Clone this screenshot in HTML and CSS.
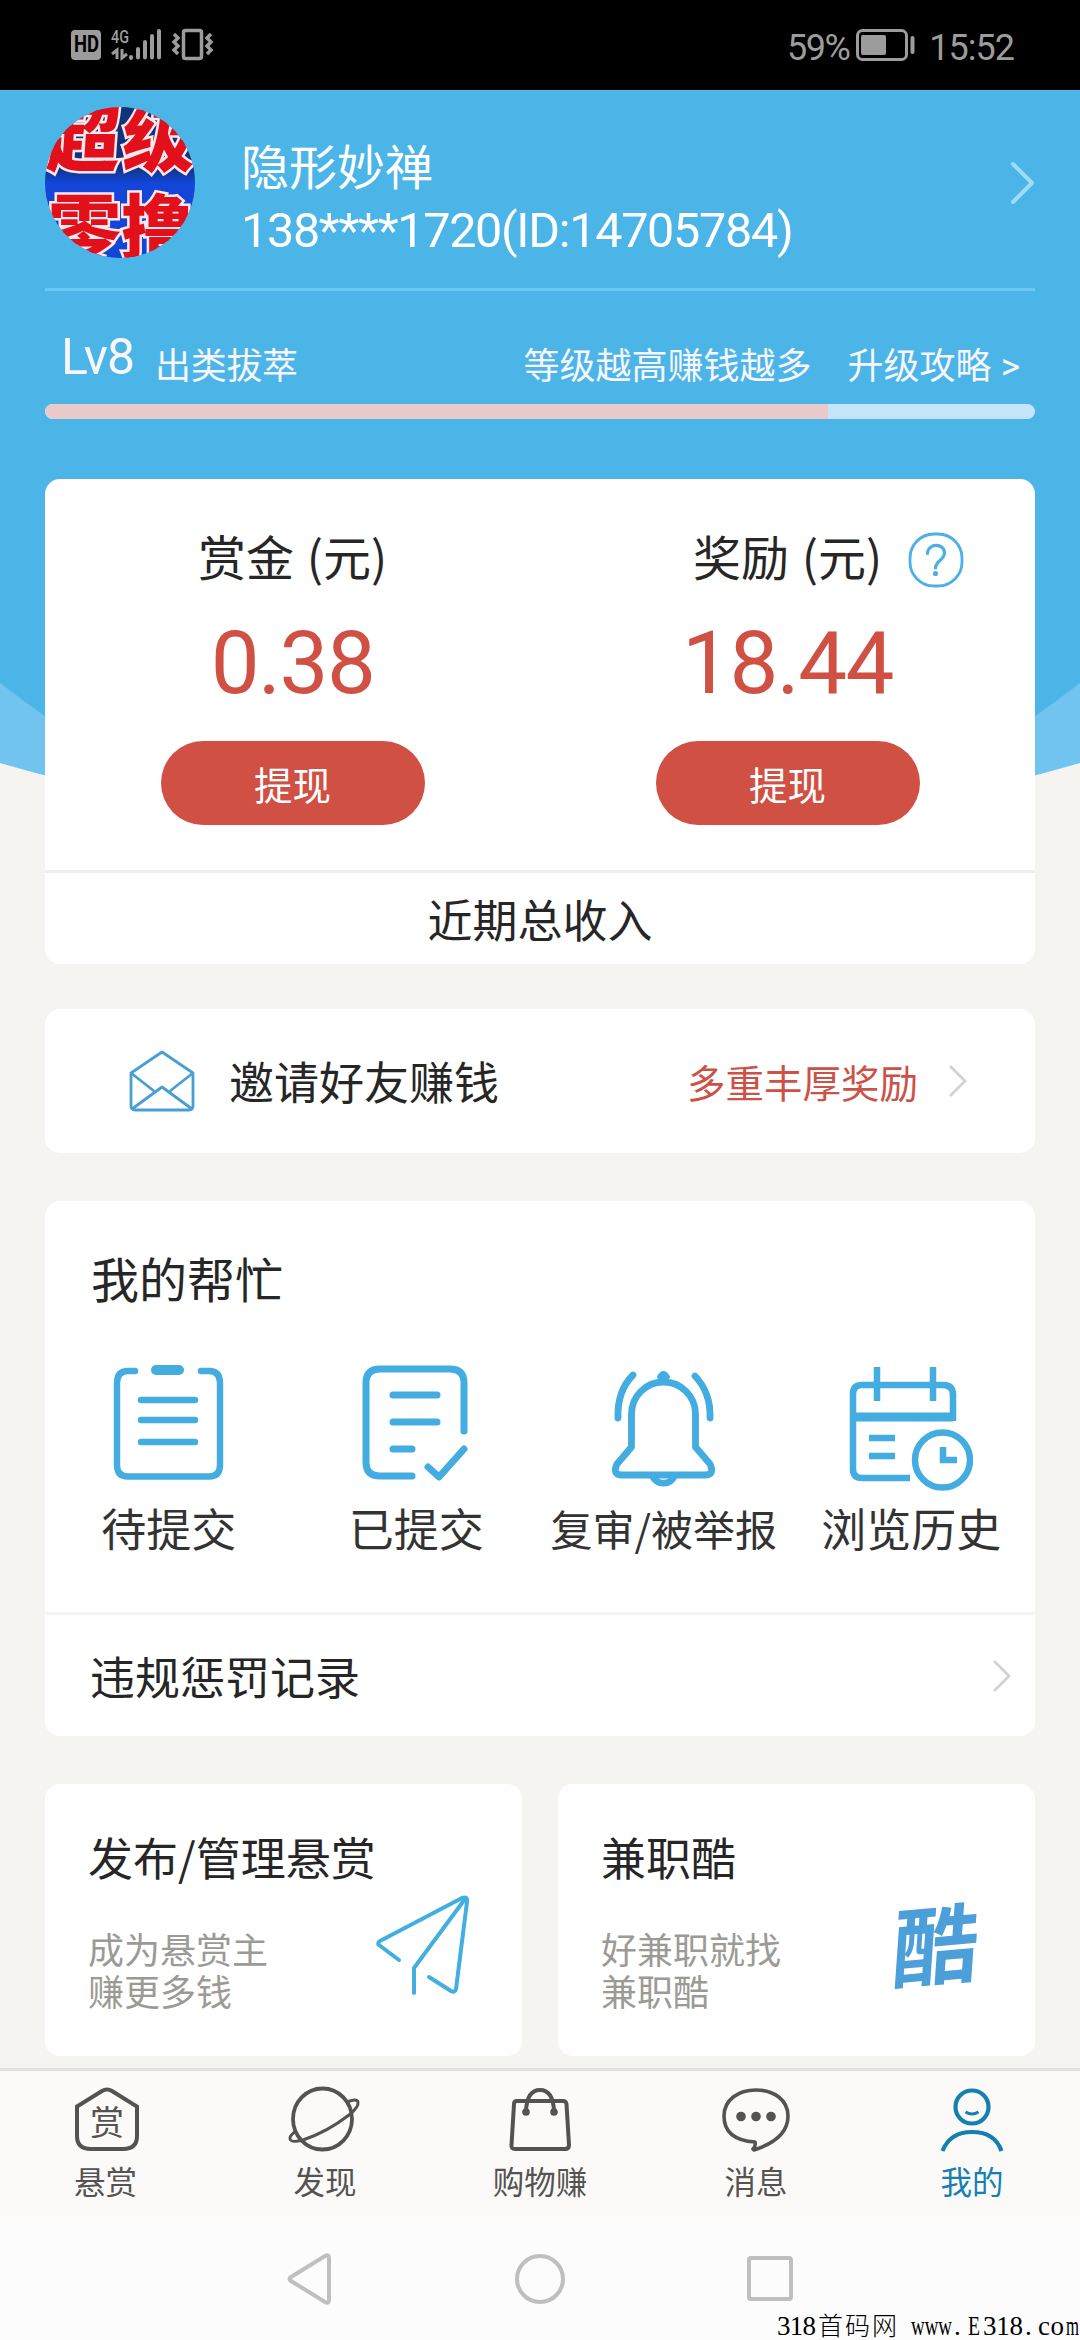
FILE: index.html
```html
<!DOCTYPE html>
<html lang="zh-CN">
<head>
<meta charset="utf-8">
<title>我的</title>
<link rel="stylesheet" href="styles.css">
</head>
<body>
<div class="screen">
  <header class="status">
    <svg class="status-icons" width="150" height="40" viewBox="68 26 150 40">
      <rect x="71" y="31" width="30" height="30" rx="4" fill="#9c9c9c"/>
      <text x="74" y="53" class="hd-label" textLength="25" lengthAdjust="spacingAndGlyphs">HD</text>
      <text x="111" y="44" class="net-label" textLength="18" lengthAdjust="spacingAndGlyphs">4G</text>
      <path d="M117 60V51L112 55M122 50V59L127 55" fill="none" stroke="#9c9c9c" stroke-width="3"/>
      <path d="M131 58V59M138 50V58.500M145 43V58.500M152 37V58.500M159 32V58.500" fill="none" stroke="#9c9c9c" stroke-width="4" stroke-linecap="round"/>
      <rect x="183.500" y="31.500" width="18" height="28" rx="2" fill="none" stroke="#9c9c9c" stroke-width="3.500"/>
      <path d="M174 35L178 39L174 43L178 47L174 51L178 55M211 35L207 39L211 43L207 47L211 51L207 55" fill="none" stroke="#9c9c9c" stroke-width="3.500"/>
    </svg>
    <div class="status-right">
      <span>59%</span>
      <svg width="62" height="34" viewBox="0 0 62 34">
        <rect x="2.500" y="2.500" width="49" height="29" rx="5" fill="none" stroke="#9c9c9c" stroke-width="3"/>
        <rect x="6" y="7" width="25" height="20" rx="2" fill="#9c9c9c"/>
        <path d="M57.500 10V24" stroke="#9c9c9c" stroke-width="4" stroke-linecap="round"/>
      </svg>
      <span class="clock">15:52</span>
    </div>
  </header>

  <main class="page">
    <svg class="backdrop" width="1080" height="900" viewBox="0 90 1080 900">
      <path d="M0 90H1080V763Q540 919 0 763Z" fill="#71c4ef"/>
      <path d="M0 90H1080V683Q540 1100 0 683Z" fill="#4cb5e8"/>
    </svg>

    <section class="profile">
      <svg class="avatar" width="150" height="151" viewBox="0 0 150 151">
        <defs>
          <clipPath id="round"><ellipse cx="75" cy="75.500" rx="75" ry="75.500"/></clipPath>
          <linearGradient id="blue" x1="0" y1="0" x2="0" y2="1">
            <stop offset="0" stop-color="#12337c"/><stop offset=".4" stop-color="#12337c"/>
            <stop offset=".5" stop-color="#1245d8"/><stop offset="1" stop-color="#1245d8"/>
          </linearGradient>
        </defs>
        <g clip-path="url(#round)">
          <rect width="150" height="151" fill="url(#blue)"/>
          <text class="avatar-text" transform="skewX(-4)" x="5" y="59" textLength="148">超级</text>
          <text class="avatar-text" x="3" y="148" textLength="146">零撸</text>
        </g>
      </svg>
      <div class="identity">
        <div class="name">隐形妙禅</div>
        <div class="account">138****1720(ID:14705784)</div>
      </div>
      <svg class="profile-arrow" width="26" height="46" viewBox="0 0 26 46"><path d="M3 4L22 23L3 42" fill="none" stroke="#a0dcfa" stroke-width="4" stroke-linecap="round" stroke-linejoin="round"/></svg>
    </section>

    <section class="level">
      <span class="level-no">Lv8</span>
      <span class="level-name">出类拔萃</span>
      <span class="level-tip">等级越高赚钱越多</span>
      <span class="level-guide">升级攻略 <b>&gt;</b></span>
    </section>
    <div class="progress"><div class="progress-value" style="width:79.1%"></div></div>

    <section class="card wallet">
      <div class="balances">
        <div class="balance">
          <div class="balance-title">赏金 <span>(元)</span></div>
          <div class="amount">0.38</div>
          <button class="withdraw">提现</button>
        </div>
        <div class="balance">
          <div class="balance-title">奖励 <span>(元)</span>
            <svg class="help" width="56" height="56" viewBox="0 0 56 56"><rect x="2" y="2" width="52" height="52" rx="24" fill="none" stroke="#4bb0e2" stroke-width="2.800"/><path d="M19.500 21.500C20 10.500 36.500 11 36.500 21C36.500 28 27.500 28.500 27.500 36" fill="none" stroke="#4bb0e2" stroke-width="3.200" stroke-linecap="round"/><circle cx="27.500" cy="41.500" r="2.600" fill="#4bb0e2"/></svg>
          </div>
          <div class="amount">18.44</div>
          <button class="withdraw">提现</button>
        </div>
      </div>
      <div class="income">近期总收入</div>
    </section>

    <section class="card invite">
      <svg class="envelope" width="66" height="64" viewBox="0 0 66 64" fill="none" stroke="#4a9fd2" stroke-width="2.800" stroke-linejoin="round"><path d="M2 24L33 3L64 24V57Q64 61 60 61H6Q2 61 2 57Z"/><path d="M2 24L25 42M64 24L41 42M3 60L33 38L63 60"/></svg>
      <span class="invite-title">邀请好友赚钱</span>
      <span class="invite-note">多重丰厚奖励</span>
      <svg width="20" height="34" viewBox="0 0 20 34"><path d="M2 2L17 17L2 32" fill="none" stroke="#d2d2d2" stroke-width="2.800"/></svg>
    </section>

    <section class="card help-card">
      <h2>我的帮忙</h2>
      <div class="tools">
        <div class="tool">
          <svg width="112" height="130" viewBox="0 0 112 130" fill="none" stroke="#43ace0" stroke-width="6.400" stroke-linecap="round"><path d="M22 8H15Q4 8 4 20V102Q4 113.500 15 113.500H96Q107 113.500 107 102V20Q107 8 96 8H88M28 37H82M28 57H82M28 79H82"/><path d="M43 7H66" stroke-width="10"/></svg>
          <span>待提交</span>
        </div>
        <div class="tool">
          <svg width="112" height="130" viewBox="0 0 112 130" fill="none" stroke="#43ace0" stroke-width="7" stroke-linecap="round" stroke-linejoin="round"><path d="M52 113H20Q6 113 6 99V20Q6 6 20 6H90Q104 6 104 20V68M33 32H77M33 59H77M33 86H52"/><path d="M68 104L79 114L104 86"/></svg>
          <span>已提交</span>
        </div>
        <div class="tool">
          <svg width="112" height="130" viewBox="0 0 112 130" fill="none" stroke="#43ace0" stroke-width="6.800" stroke-linejoin="round"><path d="M23.500 84V51A32 32 0 0 1 87.500 51V84L102 101Q107 112 97 112H14Q4 112 9 101Z"/><path d="M44.500 113A12 12 0 0 0 66.500 113"/><path d="M51 14Q55.500 6 60 14Z" fill="#43ace0" stroke-width="4"/><path d="M25 12Q9 28 10 55M87 13Q103 30 102 55" stroke-linecap="round"/></svg>
          <span class="narrow">复审/被举报</span>
        </div>
        <div class="tool">
          <svg width="124" height="130" viewBox="0 0 124 130" fill="none" stroke="#43ace0" stroke-width="6.500"><path d="M61 115H13Q4 115 4 106V31Q4 22 13 22H94Q104 22 104 32V58"/><path d="M4 54H104" stroke-width="9"/><path d="M28 4V38M84 4V38M20 75H46M20 93H46"/><circle cx="93.500" cy="97" r="27.500"/><path d="M94 84V97H108"/></svg>
          <span>浏览历史</span>
        </div>
      </div>
      <div class="record">
        <span>违规惩罚记录</span>
        <svg width="20" height="34" viewBox="0 0 20 34"><path d="M2 2L17 17L2 32" fill="none" stroke="#d2d2d2" stroke-width="2.800"/></svg>
      </div>
    </section>

    <section class="promos">
      <div class="card promo">
        <h3>发布/管理悬赏</h3>
        <div class="promo-body">
          <p>成为悬赏主<br>赚更多钱</p>
          <svg class="plane" width="96" height="102" viewBox="0 0 96 102" fill="none" stroke="#43aee0" stroke-width="4" stroke-linecap="round" stroke-linejoin="round"><path d="M24 66L4 51Q2 49 5 47L87 4Q93 2 92 8L81 95Q80 99 76 97L54 83"/><path d="M39 99V74L90 5"/></svg>
        </div>
      </div>
      <div class="card promo">
        <h3>兼职酷</h3>
        <div class="promo-body">
          <p>好兼职就找<br>兼职酷</p>
          <span class="brush">酷</span>
        </div>
      </div>
    </section>
  </main>

  <nav class="tabs">
    <a class="tab"><svg width="72" height="66" viewBox="0 0 72 66"><path d="M5 20.500L30 5Q35 2 40 5L65 20.500V50Q65 63 51 63H19Q5 63 5 50Z" fill="none" stroke="#555351" stroke-width="4"/><text x="35" y="49" text-anchor="middle" class="tab-glyph">赏</text></svg><span class="n1">悬赏</span></a>
    <a class="tab"><svg width="74" height="66" viewBox="0 0 74 66" fill="none" stroke="#555351" stroke-width="3.800"><ellipse cx="35.500" cy="33" rx="29.500" ry="30.500"/><path d="M60 16Q70 12 71 16Q72 21 62 29Q40 46 16 54Q4 57 3 53Q2 50 9 45" stroke-width="3"/></svg><span class="n2">发现</span></a>
    <a class="tab"><svg width="66" height="66" viewBox="0 0 66 66" fill="none" stroke="#555351" stroke-width="4"><path d="M10 15H56Q59 15 59.500 18L62 59Q62 63 58 63H8Q4 63 4.500 59L7 18Q7 15 10 15Z"/><path d="M19 25Q20 4 33 4Q46 4 47 25"/><circle cx="19" cy="26" r="1.800"/><circle cx="47" cy="26" r="1.800"/></svg><span>购物赚</span></a>
    <a class="tab"><svg width="72" height="66" viewBox="0 0 72 66" fill="none" stroke="#555351" stroke-width="3.600"><path d="M34 64Q68 53 68 30C68 14 54 4 36 4C18 4 4 14 4 30Q4 54 35 56Q36 60 33 63Z" stroke-linejoin="round"/><g fill="#555351" stroke="none"><circle cx="21" cy="30.500" r="4.800"/><circle cx="36" cy="30.500" r="4.800"/><circle cx="51" cy="30.500" r="4.800"/></g></svg><span>消息</span></a>
    <a class="tab active"><svg width="68" height="66" viewBox="0 0 68 66" fill="none" stroke="#1480b2" stroke-width="4.200"><circle cx="34" cy="21" r="16.500"/><path d="M27.500 26Q34 30 40.500 26" stroke-width="3"/><path d="M4.500 65Q12 46 34 46Q57 46 63.500 65"/></svg><span>我的</span></a>
  </nav>

  <footer class="system-nav">
    <svg width="52" height="54" viewBox="0 0 52 54"><path d="M44 6V48Q44 52 40 50L6 29Q3 27 6 25L40 4Q44 2 44 6Z" fill="none" stroke="#bfbfbf" stroke-width="4"/></svg>
    <svg width="54" height="54" viewBox="0 0 54 54"><circle cx="27" cy="27" r="23" fill="none" stroke="#bfbfbf" stroke-width="4"/></svg>
    <svg width="52" height="54" viewBox="0 0 52 54"><rect x="6" y="6" width="42" height="41" rx="2" fill="none" stroke="#bfbfbf" stroke-width="4"/></svg>
    <svg class="watermark" width="304" height="30" viewBox="0 0 304 30">
      <text x="1" y="25" textLength="39">318</text>
      <text x="42" y="25" textLength="79" class="kai">首码网</text>
      <text x="135" y="25" textLength="41" lengthAdjust="spacingAndGlyphs">www</text>
      <text x="178" y="25">.</text>
      <text x="192" y="25" textLength="12" lengthAdjust="spacingAndGlyphs">E</text>
      <text x="207" y="25" textLength="40">318</text>
      <text x="249" y="25">.</text>
      <text x="262" y="25" textLength="26">co</text>
      <text x="290" y="25" textLength="13" lengthAdjust="spacingAndGlyphs">m</text>
    </svg>
  </footer>
</div>
</body>
</html>
```
FILE: styles.css
```css
* { box-sizing: border-box; }
body {
  margin: 0;
  background: #f5f4f1;
  font-family: "Noto Sans CJK SC", "Noto Sans", sans-serif;
  color: #262626;
}
svg { display: block; flex: none; }
h2, h3, p { margin: 0; font-weight: 400; }
.screen { width: 1080px; height: 2340px; display: flex; flex-direction: column; overflow: hidden; }

/* status bar */
.status { height: 90px; padding: 0 66px 0 68px; background: #000; display: flex; justify-content: space-between; align-items: center; }
.hd-label { font: 700 23px Roboto, sans-serif; fill: #000; }
.net-label { font: 500 19px Roboto, sans-serif; fill: #9c9c9c; }
.status-right { display: flex; align-items: center; font: 36px/40px Roboto, sans-serif; color: #9c9c9c; letter-spacing: -1.5px; }
.status-right span { padding-top: 5px; }
.status-right svg { margin-left: 6px; }
.status-right .clock { margin-left: 12px; letter-spacing: -1px; }

/* page */
.page { position: relative; height: 1978px; padding: 17px 45px 0; display: flex; flex-direction: column; }
.backdrop { position: absolute; left: 0; top: 0; z-index: -1; }
.profile { height: 184px; border-bottom: 3px solid #6bc6f3; display: flex; color: #fff; flex: none; }
.avatar-text { font: 900 73px "Noto Sans CJK SC", sans-serif; fill: #e2101a; stroke: #fbe9ee; stroke-width: 5px; paint-order: stroke; }
.identity { margin-left: 46px; padding-top: 25px; flex: 1; }
.name { font-size: 48px; line-height: 64px; }
.account { margin-top: 3px; font: 48.5px/64px Roboto, sans-serif; letter-spacing: -1.3px; }
.profile-arrow { margin: 53px -1px 0 0; }
.level { height: 113px; display: flex; align-items: baseline; padding: 41px 15px 0 16px; color: #f7f6ff; font-size: 36px; line-height: 60px; white-space: nowrap; flex: none; }
.level-no { font: 50px/60px Roboto, sans-serif; letter-spacing: -1px; position: relative; top: -5px; }
.level-name { margin-left: 21px; letter-spacing: -.3px; }
.level-tip { margin-left: auto; }
.level-guide { margin-left: 36px; }
.level-guide b { margin-left: 1px; font: 37px Roboto, sans-serif; }
.progress { height: 15px; border-radius: 8px; background: #c4e5f7; overflow: hidden; flex: none; }
.progress-value { height: 15px; background: #e9c9c9; }

.card { background: #fff; border-radius: 15px; flex: none; }
.wallet { height: 485px; margin-top: 60px; }
.balances { display: flex; height: 394px; border-bottom: 3px solid #eee; }
.balance { flex: 1; display: flex; flex-direction: column; align-items: center; }
.balance-title { position: relative; margin-top: 44px; font-size: 48px; line-height: 64px; white-space: nowrap; }
.balance-title span { margin-left: 2px; }
.help { position: absolute; right: -82px; top: 9px; }
.amount { margin-top: 24px; font: 87px/104px Roboto, sans-serif; letter-spacing: -1.5px; color: #d05044; }
.withdraw { width: 264px; height: 84px; margin-top: 26px; padding: 0; border: 0; border-radius: 42px; background: #d05044; color: #fff; font: 38.500px/80px "Noto Sans CJK SC", sans-serif; }
.income { text-align: center; font-size: 45px; line-height: 92px; }

.invite { height: 144px; margin-top: 45px; padding: 0 67px 0 84px; display: flex; align-items: center; }
.invite-title { margin-left: 34px; font-size: 45px; line-height: 60px; }
.invite-note { margin: 0 30px 0 auto; font-size: 38.500px; line-height: 56px; color: #cc5146; }

.help-card { height: 535px; margin-top: 48px; }
.help-card h2 { padding: 44px 0 0 46px; font-size: 48px; line-height: 64px; }
.tools { display: flex; height: 303px; padding-top: 54px; }
.tool { width: 247.500px; display: flex; flex-direction: column; align-items: center; font-size: 45px; line-height: 60px; color: #333; }
.tool svg { margin-bottom: 5px; }
.tool .narrow { font-size: 42px; }
.record { height: 124px; border-top: 3px solid #f5f5f3; padding: 0 23px 0 45px; display: flex; align-items: center; justify-content: space-between; font-size: 45px; }

.promos { display: grid; grid-template-columns: 477px 477px; gap: 36px; margin-top: 48px; }
.promo { height: 272px; padding: 42px 51px 0 43px; }
.promo h3 { font-size: 45px; line-height: 62px; white-space: nowrap; }
.promo-body { display: flex; justify-content: space-between; }
.promo p { margin-top: 39px; font-size: 36px; line-height: 42px; color: #9c9a94; }
.plane { margin: 6px 0 0; }
.brush { font-size: 86px; line-height: 90px; font-weight: 700; color: #4d9fda; transform: rotate(-5deg) skewX(-9deg); margin: 8px 5px 0 0; height: 90px; }

/* bottom bars */
.tabs { height: 149px; border-top: 3px solid #e2e1de; background: #fbfaf8; display: grid; grid-template-columns: repeat(5, 216px); flex: none; }
.tab { display: flex; flex-direction: column; align-items: center; padding-top: 15px; color: #555351; font-size: 32px; line-height: 44px; }
.tab svg { margin-bottom: 6px; }
.tab span { font-size: 31.500px; }
.tab .n1 { margin-right: 5px; }
.tab .n2 { margin-left: 2px; }
.tab-glyph { font-size: 34px; fill: #555351; }
.tab.active { color: #1480b2; }
.system-nav { position: relative; height: 123px; background: #fcfcfc; display: flex; justify-content: space-between; padding: 35px 285px 0; flex: none; }
.watermark { position: absolute; right: 0; bottom: 0; font: 27px "Liberation Serif", serif; fill: #000; }
.kai { font-family: "Noto Sans CJK SC", sans-serif; font-weight: 300; font-size: 25px; }
```
